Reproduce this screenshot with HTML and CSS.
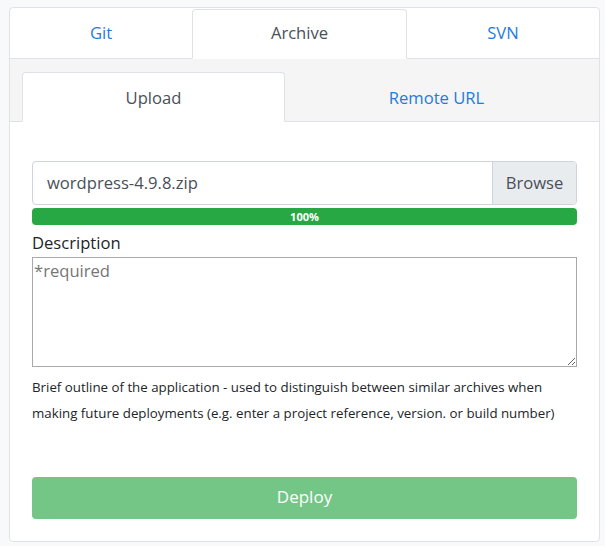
FILE: index.html
```html
<!DOCTYPE html>
<html lang="en">
<head>
<meta charset="utf-8">
<title>Deploy</title>
<link rel="stylesheet" href="styles.css">
</head>
<body>
<div class="card">
  <div class="tabs">
    <a class="tab">Git</a>
    <a class="tab active">Archive</a>
    <a class="tab">SVN</a>
  </div>
  <div class="subnav">
    <div class="subtabs">
      <a class="subtab active">Upload</a>
      <a class="subtab">Remote URL</a>
    </div>
  </div>
  <div class="body">
    <div class="file-group">
      <div class="file-name">wordpress-4.9.8.zip</div>
      <div class="file-btn">Browse</div>
    </div>
    <div class="progress">100%</div>
    <label class="label" for="desc">Description</label>
    <textarea id="desc" class="desc" placeholder="*required"></textarea>
    <p class="help">Brief outline of the application - used to distinguish between similar archives when making future deployments (e.g. enter a project reference, version. or build number)</p>
    <button class="deploy" disabled>Deploy</button>
  </div>
</div>
</body>
</html>
```

FILE: styles.css
```css
* { box-sizing: border-box; }
html, body { margin: 0; padding: 0; }
body {
  background: #f8f9fa;
  font-family: "Open Sans", "Noto Sans", sans-serif;
  font-size: 16.6px;
  color: #212529;
  padding: 7px 6px 5px 9px;
}
.card {
  width: 591px;
  height: 535px;
  background: #fff;
  border: 1px solid #dfe3e7;
  border-radius: 4px;
  display: flex;
  flex-direction: column;
}
.tabs {
  display: grid;
  grid-template-columns: 182px 215px 1fr;
  height: 51px;
  padding-top: 1px;
  border-bottom: 1px solid #dee2e6;
}
.tab {
  display: flex;
  align-items: center;
  justify-content: center;
  padding-bottom: 3px;
  color: #1e7be0;
  margin-bottom: -1px;
  border: 1px solid transparent;
  border-radius: 4px 4px 0 0;
}
.tab.active {
  color: #495057;
  background: #fff;
  border-color: #dee2e6 #dee2e6 #fff;
}
.subnav {
  background: #f5f5f5;
  padding: 13px 11px 0 12px;
  border-bottom: 1px solid #dee2e6;
}
.subtabs {
  display: grid;
  grid-template-columns: 263px 1fr;
  height: 49px;
}
.subtab {
  display: flex;
  align-items: center;
  justify-content: center;
  color: #1e7be0;
  margin-bottom: -1px;
  border: 1px solid transparent;
  border-radius: 4px 4px 0 0;
}
.subtab.active {
  color: #495057;
  background: #fff;
  border-color: #dee2e6 #dee2e6 #fff;
}
.body {
  flex: 1;
  padding: 39px 22px 0 22px;
  display: flex;
  flex-direction: column;
}
.file-group {
  display: flex;
  height: 44px;
  border: 1px solid #ced4da;
  border-radius: 4px;
  overflow: hidden;
}
.file-name {
  flex: 1;
  display: flex;
  align-items: center;
  padding: 0 0 2px 14px;
  color: #495057;
}
.file-btn {
  width: 84px;
  display: flex;
  align-items: center;
  justify-content: center;
  padding-bottom: 2px;
  background: #e9ecef;
  border-left: 1px solid #ced4da;
  color: #495057;
}
.progress {
  margin-top: 3px;
  height: 17px;
  border-radius: 4px;
  background: #28a745;
  color: #fff;
  font-size: 11px;
  font-weight: 700;
  line-height: 17px;
  text-align: center;
}
.label {
  margin-top: 6px;
  line-height: 23px;
  color: #212529;
}
.desc {
  display: block;
  width: 100%;
  height: 110px;
  margin: 3px 0 0;
  padding: 1px 1px;
  border: 1px solid #a9a9a9;
  border-radius: 0;
  font-family: inherit;
  font-size: 16.6px;
  color: #495057;
  resize: vertical;
}
.desc::placeholder { color: #767676; }
.help {
  margin: 7px 0 0;
  font-size: 13.3px;
  line-height: 26px;
  color: #212529;
}
.deploy {
  margin-top: 51px;
  height: 42px;
  padding-bottom: 4px;
  border: 0;
  border-radius: 4px;
  background: #74c687;
  color: #fff;
  font-family: inherit;
  font-size: 17px;
}
```
